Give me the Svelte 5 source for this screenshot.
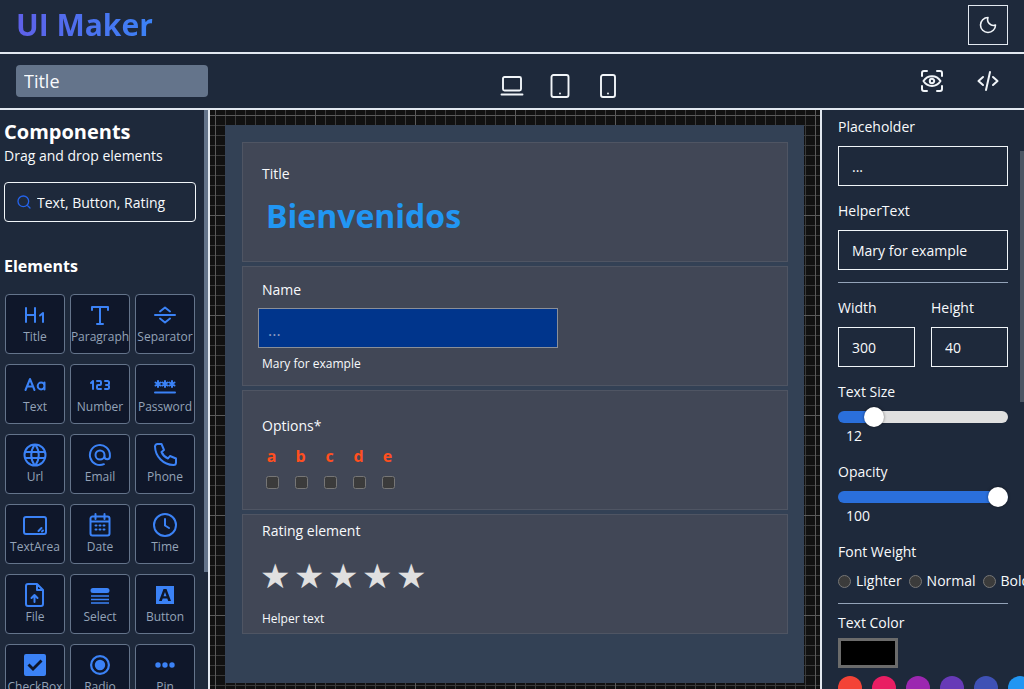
<script>
  const widgets = [
    { label: 'Title', d: 'M3 5v14M12 5v14M3 12h9M20 19v-9l-3 2.500' },
    { label: 'Paragraph', d: 'M4 7V4h16v3M12 4v17M9 21h6' },
    { label: 'Separator', d: 'M2 12h20M7 8.500l5-4 5 4M7 15.500l5 4 5-4' },
    { label: 'Text', d: 'M2.500 17l4.500-11 4.500 11M4.200 13.500h5.600M21.500 9.500v7M21.500 13a3.400 3.400 0 1 1-6.800 0a3.400 3.400 0 1 1 6.800 0' },
    { label: 'Number', d: 'M3 10l2-2v8M9 8h3a1 1 0 0 1 1 1v2a1 1 0 0 1-1 1h-2a1 1 0 0 0-1 1v2a1 1 0 0 0 1 1h3M17 8h2.500a1.500 1.500 0 0 1 1.500 1.500v1a1.500 1.500 0 0 1-1.500 1.500H18h1.500a1.500 1.500 0 0 1 1.500 1.500v1a1.500 1.500 0 0 1-1.500 1.500H17' },
    { label: 'Password', d: 'M2 19.500h20M5 8v6M2.500 9.500l5 3M7.500 9.500l-5 3M12 8v6M9.500 9.500l5 3M14.500 9.500l-5 3M19 8v6M16.500 9.500l5 3M21.500 9.500l-5 3' },
    { label: 'Url', d: 'M12 1.500a10.500 10.500 0 1 0 0 21a10.500 10.500 0 1 0 0-21M2 9h20M2 15h20M11.500 2a17 17 0 0 0 0 20M12.500 2a17 17 0 0 1 0 20' },
    { label: 'Email', d: 'M12 7.500a4.500 4.500 0 1 0 0 9a4.500 4.500 0 1 0 0-9M16.500 12v1.500a2.700 2.700 0 0 0 5.400 0V12a10 10 0 1 0-6 9.200' },
    { label: 'Phone', d: 'M4.500 1h4l2.500 6-2.500 2a12 12 0 0 0 6.500 6.500l2-2.500 6 2.500v4a2.500 2.500 0 0 1-2.500 2.500A19 19 0 0 1 2 3.500a2.500 2.500 0 0 1 2.500-2.500' },
    { label: 'TextArea', d: 'M3 4h18a2 2 0 0 1 2 2v13a2 2 0 0 1-2 2H3a2 2 0 0 1-2-2V6a2 2 0 0 1 2-2M15.500 18l3-3M19 18.500l1-1' },
    { label: 'Date', d: 'M4.500 3.500h15a2 2 0 0 1 2 2v15a2 2 0 0 1-2 2h-15a2 2 0 0 1-2-2v-15a2 2 0 0 1 2-2M7.500 1v5M16.500 1v5M2.500 8.500h19M7.500 12.500h1M11.500 12.500h1M15.500 12.500h1M7.500 16.500h1M11.500 16.500h1M15.500 16.500h1' },
    { label: 'Time', d: 'M12 1a11 11 0 1 0 0 22a11 11 0 1 0 0-22M12 6v6.500l4 2.500' },
    { label: 'File', d: 'M5 1h9l6 6v14a2 2 0 0 1-2 2H5a2 2 0 0 1-2-2V3a2 2 0 0 1 2-2M14 1v6h6M11.500 19v-7M8.500 15l3-3 3 3' },
    { label: 'Select', fill: true, d: 'M5 5h14a2.500 2.500 0 0 1 0 5H5a2.500 2.500 0 0 1 0-5zM3 12.200h18v1.600H3zM3 15.700h18v1.600H3zM3 19.200h18v1.600H3z' },
    { label: 'Button', fill: true, d: 'M3 3h18v18H3zM10.500 6l-4.500 12h2.800l.9-2.600h4.600l.9 2.600H18L13.500 6zM12 9l1.500 4.200h-3z' },
    { label: 'CheckBox', fill: true, d: 'M3 1h18a2 2 0 0 1 2 2v18a2 2 0 0 1-2 2H3a2 2 0 0 1-2-2V3a2 2 0 0 1 2-2zM10 18l-5.500-5.500 2-2 3.500 3.500 7.500-7.500 2 2z' },
    { label: 'Radio', fill: true, d: 'M12 2a10 10 0 1 0 0 20a10 10 0 1 0 0-20zM12 4.200a7.800 7.800 0 1 1 0 15.600a7.800 7.800 0 1 1 0-15.600zM12 6.800a5.200 5.200 0 1 0 0 10.400a5.200 5.200 0 1 0 0-10.400z' },
    { label: 'Pin', fill: true, d: 'M5 9.300a2.700 2.700 0 1 0 0 5.400a2.700 2.700 0 1 0 0-5.400zM12 9.300a2.700 2.700 0 1 0 0 5.400a2.700 2.700 0 1 0 0-5.400zM19 9.300a2.700 2.700 0 1 0 0 5.400a2.700 2.700 0 1 0 0-5.400z' }
  ];

  const devices = [
    'M4.500 3h15a1.500 1.500 0 0 1 1.500 1.500V15a1.500 1.500 0 0 1-1.500 1.500h-15A1.500 1.500 0 0 1 3 15V4.500A1.500 1.500 0 0 1 4.500 3M1.500 20.500h21',
    'M5.500 1h13a2 2 0 0 1 2 2v18a2 2 0 0 1-2 2h-13a2 2 0 0 1-2-2V3a2 2 0 0 1 2-2M12 19.500v.1',
    'M7 1h10a2 2 0 0 1 2 2v18a2 2 0 0 1-2 2H7a2 2 0 0 1-2-2V3a2 2 0 0 1 2-2M12 19.500v.1'
  ];

  const options = ['a', 'b', 'c', 'd', 'e'];
  const swatches = ['#f44336', '#e91e63', '#9c27b0', '#673ab7', '#3f51b5', '#2196f3'];
  const weights = ['Lighter', 'Normal', 'Bold'];
</script>

<div class="app">
  <header class="topbar">
    <h1 class="logo">UI Maker</h1>
    <button class="theme">
      <svg width="20" height="20" viewBox="0 0 24 24" class="line"><path d="M12 3a9 9 0 1 0 9 9 7 7 0 0 1-9-9z" /></svg>
    </button>
  </header>

  <div class="toolbar">
    <input class="name" value="Title" />
    <div class="devices">
      {#each devices as d}
        <svg width="24" height="24" viewBox="0 0 24 24" class="line"><path {d} /></svg>
      {/each}
    </div>
    <div class="actions">
      <svg width="24" height="24" viewBox="0 0 24 24" class="line thick"><path d="M2 7V4a2 2 0 0 1 2-2h3M17 2h3a2 2 0 0 1 2 2v3M22 17v3a2 2 0 0 1-2 2h-3M7 22H4a2 2 0 0 1-2-2v-3M3.500 12c4-6.500 13-6.500 17 0c-4 6.500-13 6.500-17 0zM12 9.800a2.200 2.200 0 1 0 0 4.400a2.200 2.200 0 1 0 0-4.400z" /></svg>
      <svg width="24" height="24" viewBox="0 0 24 24" class="line thick"><path d="M7 8l-4.500 4 4.500 4M17 8l4.500 4-4.500 4M14 3l-4 18" /></svg>
    </div>
  </div>

  <main class="workspace">
    <aside class="components">
      <h2>Components</h2>
      <p class="sub">Drag and drop elements</p>
      <label class="search">
        <svg width="16" height="16" viewBox="0 0 24 24"><path d="M11 3a8 8 0 1 0 0 16a8 8 0 1 0 0-16M21 21l-4.500-4.500" /></svg>
        <input value="Text, Button, Rating" />
      </label>
      <h3>Elements</h3>
      <div class="grid">
        {#each widgets as w}
          <div class="widget">
            <svg width="24" height="24" viewBox="0 0 24 24" class:filled={w.fill}><path d={w.d} fill-rule="evenodd" /></svg>
            <span>{w.label}</span>
          </div>
        {/each}
      </div>
      <i class="thumb left"></i>
    </aside>

    <section class="stage">
      <div class="canvas">
        <div class="element">
          <div class="lbl title-lbl">Title</div>
          <div class="big">Bienvenidos</div>
        </div>
        <div class="element">
          <div class="lbl name-lbl">Name</div>
          <input class="field" placeholder="..." />
          <div class="help">Mary for example</div>
        </div>
        <div class="element">
          <div class="lbl opt-lbl">Options*</div>
          <div class="opts">
            {#each options as o}
              <label class="opt"><b>{o}</b><input type="checkbox" /></label>
            {/each}
          </div>
        </div>
        <div class="element">
          <div class="lbl rate-lbl">Rating element</div>
          <div class="stars">
            {#each [1, 2, 3, 4, 5] as s}<span>★</span>{/each}
          </div>
          <div class="help helper">Helper text</div>
        </div>
      </div>
    </section>

    <aside class="props">
      <div class="prop-lbl first">Placeholder</div>
      <input class="box" value="..." />
      <div class="prop-lbl">HelperText</div>
      <input class="box" value="Mary for example" />
      <hr />
      <div class="pair">
        <div>
          <div class="prop-lbl">Width</div>
          <input class="box" value="300" />
        </div>
        <div>
          <div class="prop-lbl">Height</div>
          <input class="box" value="40" />
        </div>
      </div>
      <div class="prop-lbl">Text Size</div>
      <input class="range" type="range" min="0" max="70" value="12" style="--pct: 21%" />
      <div class="val">12</div>
      <div class="prop-lbl next">Opacity</div>
      <input class="range" type="range" min="0" max="100" value="100" style="--pct: 100%" />
      <div class="val">100</div>
      <div class="prop-lbl next">Font Weight</div>
      <div class="weights">
        {#each weights as w}
          <label><input type="radio" name="weight" />{w}</label>
        {/each}
      </div>
      <hr />
      <div class="prop-lbl color-lbl">Text Color</div>
      <div class="swatch"></div>
      <div class="colors">
        {#each swatches as c}
          <span style="background: {c}"></span>
        {/each}
      </div>
      <i class="thumb right"></i>
    </aside>
  </main>
</div>

<style>
  :global(body) {
    overflow: hidden;
    background: #1e293b;
  }
  .app {
    height: 689px;
    display: flex;
    flex-direction: column;
    overflow: hidden;
    font-family: "Open Sans", sans-serif;
    font-size: 14px;
    color: #f8fafc;
    background: #1e293b;
  }
  .topbar {
    flex: none;
    height: 52px;
    border-bottom: 2px solid #e2e8f0;
    display: flex;
    align-items: center;
    justify-content: space-between;
    padding: 0 16px;
  }
  .logo {
    margin: 0 0 2px;
    font-size: 30px;
    line-height: 40px;
    font-weight: 700;
    background: linear-gradient(90deg, #5f60e8, #3b82f6);
    -webkit-background-clip: text;
    background-clip: text;
    color: transparent;
  }
  .theme {
    width: 40px;
    height: 40px;
    margin-bottom: 3px;
    padding: 0;
    background: none;
    border: 1px solid #e2e8f0;
    display: flex;
    align-items: center;
    justify-content: center;
  }
  .line {
    fill: none;
    stroke: #f1f5f9;
    stroke-width: 1.9;
    stroke-linecap: round;
    stroke-linejoin: round;
  }
  .line.thick {
    stroke-width: 2;
  }
  .toolbar {
    flex: none;
    height: 54px;
    border-bottom: 2px solid #e2e8f0;
    display: flex;
    align-items: center;
    padding: 0 24px 0 16px;
  }
  .name {
    width: 192px;
    height: 32px;
    box-sizing: border-box;
    padding: 0 8px;
    border: none;
    border-radius: 4px;
    background: #64748b;
    color: #f8fafc;
    font: 18px "Open Sans", sans-serif;
  }
  .devices {
    display: flex;
    gap: 24px;
    margin-left: 292px;
    margin-top: 10px;
  }
  .actions {
    display: flex;
    gap: 32px;
    margin-left: auto;
  }
  .workspace {
    flex: 1;
    min-height: 0;
    display: flex;
  }
  .components {
    flex: none;
    width: 204px;
    padding: 8px 0 0 4px;
    box-sizing: border-box;
    margin-right: 4px;
    position: relative;
  }
  .components h2 {
    margin: 0;
    font-size: 20px;
    line-height: 28px;
    font-weight: 700;
    color: #fff;
  }
  .sub {
    margin: 0;
    line-height: 20px;
  }
  .search {
    width: 192px;
    height: 40px;
    box-sizing: border-box;
    margin-top: 16px;
    border: 1px solid #f1f5f9;
    border-radius: 4px;
    display: flex;
    align-items: center;
    gap: 5px;
    padding-left: 11px;
  }
  .search svg {
    flex: none;
    fill: none;
    stroke: #2563eb;
    stroke-width: 2;
    stroke-linecap: round;
  }
  .search input {
    width: 150px;
    padding: 0;
    background: none;
    border: none;
    color: #f8fafc;
    font: 14px "Open Sans", sans-serif;
  }
  .components h3 {
    margin: 33px 0 17px;
    font-size: 16px;
    line-height: 22px;
    font-weight: 700;
    color: #fff;
  }
  .grid {
    display: grid;
    grid-template-columns: repeat(3, 60px);
    grid-auto-rows: 60px;
    gap: 10px 5px;
    margin-left: 1px;
  }
  .widget {
    box-sizing: border-box;
    border: 1px solid #64748b;
    border-radius: 4px;
    background: #0f172a;
    color: #94a3b8;
    font-size: 12px;
    line-height: 16px;
    display: flex;
    flex-direction: column;
    align-items: center;
    padding-top: 8px;
    overflow: hidden;
    white-space: nowrap;
  }
  .widget svg {
    flex: none;
    fill: none;
    stroke: #3b82f6;
    stroke-width: 2;
    stroke-linecap: round;
    stroke-linejoin: round;
    margin-bottom: 2px;
  }
  .widget svg.filled {
    fill: #3b82f6;
    stroke: none;
  }
  .widget span {
    display: block;
  }
  .thumb {
    position: absolute;
    width: 4px;
    background: #64748b;
  }
  .thumb.left {
    top: 0;
    height: 462px;
    right: -4px;
  }
  .thumb.right {
    right: 0;
    top: 41px;
    height: 251px;
    background: #4b5563;
  }
  .stage {
    flex: none;
    width: 614px;
    box-sizing: border-box;
    border-left: 2px solid #e2e8f0;
    border-right: 2px solid #e2e8f0;
    padding: 15px 16px 15px 15px;
    background-color: #111;
    background-image:
      linear-gradient(#5a5a5a 1px, transparent 1px),
      linear-gradient(90deg, #5a5a5a 1px, transparent 1px),
      linear-gradient(#3a3a3a 1px, transparent 1px),
      linear-gradient(90deg, #3a3a3a 1px, transparent 1px);
    background-size: 100px 100px, 100px 100px, 10px 10px, 10px 10px;
    background-position: 5px 5px;
  }
  .canvas {
    height: 558px;
    box-sizing: border-box;
    background: #334155;
    padding: 17px 16px 17px 17px;
    display: flex;
    flex-direction: column;
    gap: 4px;
  }
  .element {
    height: 120px;
    box-sizing: border-box;
    flex: none;
    padding: 0 19px;
    background: #414756;
    border: 1px solid #4f5563;
  }
  .lbl {
    line-height: 20px;
  }
  .title-lbl {
    margin-top: 21px;
  }
  .big {
    margin: 10px 0 0 4px;
    font-size: 32px;
    line-height: 44px;
    font-weight: 700;
    color: #2196f3;
  }
  .name-lbl {
    margin-top: 13px;
  }
  .field {
    display: block;
    width: 300px;
    height: 40px;
    box-sizing: border-box;
    margin: 8px 0 0 -4px;
    padding: 4px 9px 0;
    background: #00358c;
    border: 1px solid #8a8f98;
    color: #fff;
    font: 16px "Open Sans", sans-serif;
  }
  .field::placeholder {
    color: #8d9cc0;
    opacity: 1;
  }
  .help {
    font-size: 12px;
    line-height: 16px;
    margin-top: 8px;
  }
  .opt-lbl {
    margin-top: 25px;
  }
  .opts {
    display: flex;
    gap: 16px;
    margin: 10px 0 0 4px;
  }
  .opt {
    width: 13px;
    display: flex;
    flex-direction: column;
    align-items: center;
    color: #ff4f20;
  }
  .opt b {
    line-height: 20px;
    font-size: 16px;
    margin-right: 2px;
  }
  .opt input {
    appearance: none;
    width: 13px;
    height: 13px;
    box-sizing: border-box;
    margin: 10px 0 0;
    background: #3b3b3b;
    border: 1px solid #767676;
    border-radius: 2.5px;
  }
  .rate-lbl {
    margin-top: 6px;
  }
  .stars {
    display: flex;
    margin: 15px 0 0 -2px;
    height: 40px;
    color: #e0e0e0;
    font: 34px/40px "DejaVu Sans", sans-serif;
  }
  .stars span {
    display: block;
    width: 34px;
  }
  .helper {
    margin-top: 15px;
  }
  .props {
    flex: 1;
    min-width: 0;
    padding: 7px 0 0 16px;
    position: relative;
    overflow: hidden;
  }
  .prop-lbl {
    line-height: 20px;
    margin-top: 15px;
    margin-bottom: 9px;
  }
  .prop-lbl.first {
    margin-top: 0;
  }
  .prop-lbl.next {
    margin-top: 16px;
  }
  .box {
    display: block;
    width: 170px;
    height: 40px;
    box-sizing: border-box;
    padding: 0 13px;
    background: none;
    border: 1px solid #f1f5f9;
    color: #f8fafc;
    font: 14px "Open Sans", sans-serif;
  }
  hr {
    width: 170px;
    margin: 12px 0 0;
    border: none;
    border-top: 1px solid #94a3b8;
  }
  .pair {
    display: flex;
    gap: 16px;
  }
  .pair .box {
    width: 77px;
  }
  .range {
    appearance: none;
    display: block;
    width: 170px;
    height: 12px;
    margin: 0;
    border-radius: 6px;
    background: linear-gradient(90deg, #2a6fdb var(--pct), #e0e0e0 var(--pct));
  }
  .range::-webkit-slider-thumb {
    appearance: none;
    width: 20px;
    height: 20px;
    border-radius: 50%;
    background: #fff;
    box-shadow: 0 0 3px rgba(0, 0, 0, 0.5);
  }
  .val {
    line-height: 20px;
    margin: 3px 0 0 8px;
  }
  .weights {
    display: flex;
    gap: 7px;
    line-height: 20px;
    white-space: nowrap;
  }
  .weights label {
    display: flex;
    align-items: center;
    gap: 5px;
  }
  .weights input {
    appearance: none;
    width: 13px;
    height: 13px;
    box-sizing: border-box;
    margin: 0;
    border-radius: 50%;
    background: #3b3b3b;
    border: 1px solid #767676;
  }
  .color-lbl {
    margin-top: 9px;
    margin-bottom: 5px;
  }
  .swatch {
    width: 60px;
    height: 30px;
    box-sizing: border-box;
    background: #000;
    border: 3px solid #6b6b6b;
  }
  .colors {
    display: flex;
    gap: 10px;
    margin-top: 8px;
  }
  .colors span {
    flex: none;
    width: 24px;
    height: 24px;
    border-radius: 50%;
  }
</style>
